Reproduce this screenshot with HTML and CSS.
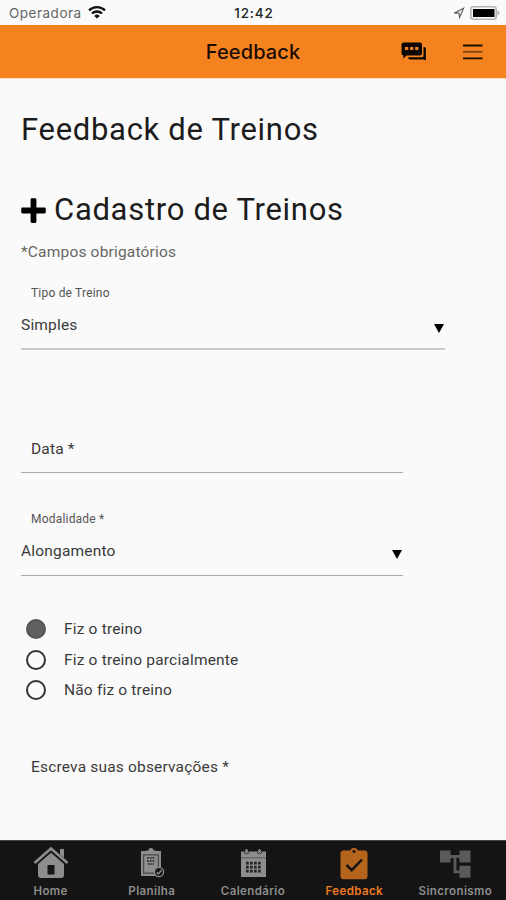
FILE: index.html
```
<!DOCTYPE html>
<html lang="pt-BR">
<head>
    <meta charset="UTF-8">
    <meta name="viewport" content="width=device-width, initial-scale=1.0">
    <title>Feedback</title>
    <link rel="stylesheet" href="styles.css">
</head>
<body>
    <div class="status-bar">
        <div class="carrier">
            <span class="carrier-name">Operadora</span>
            <svg class="wifi" width="20" height="14" viewBox="0 0 20 14">
                <path d="M2 5.4a11.4 11.4 0 0 1 16 0M5 8.5a7.2 7.2 0 0 1 10 0" fill="none" stroke="#111" stroke-width="2.3"/>
                <path d="M10 13.6L7.2 10.9a4 4 0 0 1 5.6 0z" fill="#111"/>
            </svg>
        </div>
        <span class="time">12:42</span>
        <div class="indicators">
            <svg width="12" height="12" viewBox="0 0 12 12">
                <path d="M1.2 6.1L10.5 1.3 6.6 10.4 6 6z" fill="none" stroke="#666" stroke-width="1.2"/>
            </svg>
            <svg width="30" height="14" viewBox="0 0 30 14">
                <rect x="0.8" y="0.8" width="25.4" height="12.4" rx="2.5" fill="#fafafa" stroke="#b5b5b5" stroke-width="1.6"/>
                <rect x="3" y="3" width="21.5" height="8" fill="#000"/>
                <path d="M27.3 4.3l2 1.5v2.4l-2 1.5z" fill="#b5b5b5"/>
            </svg>
        </div>
    </div>

    <header class="navbar">
        <h1>Feedback</h1>
        <div class="actions">
            <svg width="26" height="20" viewBox="0 0 26 20">
                <path d="M2.5 0.5H19a2 2 0 0 1 2 2v9a2 2 0 0 1-2 2H5.5L2.3 16.5V13.4Q0.5 13 0.5 11.5v-9a2 2 0 0 1 2-2z" fill="#0c0703"/>
                <path d="M22.5 5h.6a1.8 1.8 0 0 1 1.8 1.8v11.7L22.5 17.6H9a1.8 1.8 0 0 1-1.8-1.8v-.6H21a1.5 1.5 0 0 0 1.5-1.5z" fill="#0c0703"/>
                <path d="M4 5h3.2v3H4zM9.1 5h3.2v3H9.1zM14.2 5h3.2v3h-3.2z" fill="#f3821f"/>
            </svg>
            <svg width="20" height="16" viewBox="0 0 20 16">
                <path d="M0 1.5h19.5M0 14.3h19.5" stroke="#1a0d03" stroke-width="1.8"/>
                <path d="M0 7.8h19.5" stroke="#8b4a12" stroke-width="2"/>
            </svg>
        </div>
    </header>

    <main>
        <h2>Feedback de Treinos</h2>
        <h2 class="register">
            <svg width="25" height="25" viewBox="0 0 25 25">
                <path d="M9.6 1.6a1.4 1.4 0 0 1 1.4-1.4h3a1.4 1.4 0 0 1 1.4 1.4V9.5h8a1.4 1.4 0 0 1 1.4 1.4v3.2a1.4 1.4 0 0 1-1.4 1.4h-8v8a1.4 1.4 0 0 1-1.4 1.4h-3a1.4 1.4 0 0 1-1.4-1.4v-8H1.6a1.4 1.4 0 0 1-1.4-1.4v-3.2a1.4 1.4 0 0 1 1.4-1.4h8z"/>
            </svg>
            <span>Cadastro de Treinos</span>
        </h2>
        <p class="required">*Campos obrigatórios</p>

        <div class="field field-wide">
            <label>Tipo de Treino</label>
            <div class="select">
                <span>Simples</span>
                <i class="arrow"></i>
            </div>
        </div>

        <div class="field field-date">
            <span class="placeholder">Data *</span>
        </div>

        <div class="field">
            <label>Modalidade *</label>
            <div class="select">
                <span>Alongamento</span>
                <i class="arrow"></i>
            </div>
        </div>

        <div class="radios">
            <div class="radio checked"><i></i><span>Fiz o treino</span></div>
            <div class="radio"><i></i><span>Fiz o treino parcialmente</span></div>
            <div class="radio"><i></i><span>Não fiz o treino</span></div>
        </div>

        <p class="notes">Escreva suas observações *</p>
    </main>

    <nav class="tabbar">
        <div class="tab">
            <svg width="36" height="34" viewBox="0 0 36 34">
                <path d="M1.5 17L18 2.5 34.5 17" fill="none" stroke="#8d8d8d" stroke-width="2.6"/>
                <path d="M27 3h4v9l-4-3.6z" fill="#8d8d8d"/>
                <path d="M18 6.8L31 18v11a3 3 0 0 1-3 3H8a3 3 0 0 1-3-3V18z" fill="#8d8d8d"/>
                <path d="M14.5 19h7v9.5h-7z" fill="#141414"/>
            </svg>
            <span>Home</span>
        </div>
        <div class="tab">
            <svg width="36" height="34" viewBox="0 0 36 34">
                <path d="M7 5h20v25H7z" fill="#8d8d8d"/>
                <path d="M12 7V4.5h2.5a2.5 2.5 0 0 1 5 0H22V7z" fill="#8d8d8d"/>
                <path d="M9.6 8.8h14.8v18.4H9.6z" fill="none" stroke="#4a4a4a" stroke-width="1.2"/>
                <path d="M13 12h8M13 15h8M14 18h6" stroke="#444" stroke-width="1.8" stroke-dasharray="2 .7"/>
                <circle cx="25" cy="26" r="4.6" fill="#181818" stroke="#8d8d8d" stroke-width="1.3"/>
                <path d="M22.7 26.3l1.7 1.7 3.2-4" fill="none" stroke="#8d8d8d" stroke-width="1.3"/>
            </svg>
            <span>Planilha</span>
        </div>
        <div class="tab">
            <svg width="36" height="34" viewBox="0 0 36 34">
                <path d="M6 5.5h25V31H6z" fill="#8d8d8d"/>
                <path d="M6 11.8h25" stroke="#6a6a6a" stroke-width="1.5"/>
                <path d="M9.2 5.5a2.3 2.3 0 0 0 4.6 0M22.2 5.5a2.3 2.3 0 0 0 4.6 0" fill="none" stroke="#3a3a3a"/>
                <path d="M9.8 5.5a1.7 2.5 0 0 1 3.4 0zM22.8 5.5a1.7 2.5 0 0 1 3.4 0z" fill="#8d8d8d"/>
                <path d="M11 17.2h15M11 21.2h15M11 25.2h15" stroke="#242424" stroke-width="2.8" stroke-dasharray="2.7 1.3"/>
            </svg>
            <span>Calendário</span>
        </div>
        <div class="tab active">
            <svg width="36" height="34" viewBox="0 0 36 34">
                <path d="M7.5 4.5H14a4.3 4.3 0 0 1 8 0h6.5a3 3 0 0 1 3 3v22.7a3 3 0 0 1-3 3h-21a3 3 0 0 1-3-3V7.5a3 3 0 0 1 3-3z" fill="#b5651b"/>
                <circle cx="18" cy="5.6" r="1.5" fill="#141414"/>
                <path d="M10.5 19l5.2 5.2L26 13.5" fill="none" stroke="#141414" stroke-width="2.5"/>
            </svg>
            <span>Feedback</span>
        </div>
        <div class="tab">
            <svg width="36" height="34" viewBox="0 0 36 34">
                <path d="M3 4.5h10.5v12H3zM22.5 4.5h11v12h-11zM22.5 19.8h11v12h-11z" fill="#5a5a5a"/>
                <path d="M13 10.5h10M18 10.5v15.4h5" fill="none" stroke="#5a5a5a" stroke-width="2.8"/>
            </svg>
            <span>Sincronismo</span>
        </div>
    </nav>
</body>
</html>
```
FILE: styles.css
```
* {
    box-sizing: border-box;
}
body {
    margin: 0;
    height: 900px;
    display: flex;
    flex-direction: column;
    overflow: hidden;
    background: #fafafa;
    color: #3a3a3a;
    font-family: Roboto, sans-serif;
}
h1, h2, p {
    margin: 0;
    font-weight: 400;
}
svg {
    display: block;
    flex: none;
}
span, label {
    white-space: nowrap;
}

/* status bar */
.status-bar {
    height: 25px;
    display: grid;
    grid-template-columns: 1fr auto 1fr;
    align-items: center;
    padding: 1px 6px 0 9px;
    font-family: Inter, sans-serif;
    font-size: 13.5px;
}
.carrier, .indicators {
    display: flex;
    align-items: center;
}
.carrier {
    gap: 5px;
}
.carrier-name {
    color: #666;
    letter-spacing: 0.5px;
}
.wifi {
    margin-bottom: 2px;
}
.time {
    margin-right: 1px;
    color: #222;
    font-weight: 500;
    letter-spacing: 0.9px;
}
.indicators {
    justify-content: flex-end;
    gap: 5px;
}

/* orange bar */
.navbar {
    height: 54px;
    display: grid;
    grid-template-columns: 1fr auto 1fr;
    align-items: center;
    background: #f3821f;
    border-bottom: 1px solid #fbd9bd;
    padding: 0 23px;
}
.navbar h1 {
    grid-column: 2;
    color: #1a0d03;
    font-family: Inter, sans-serif;
    font-size: 20px;
    font-weight: 500;
    letter-spacing: 0.1px;
}
.actions {
    display: flex;
    align-items: center;
    justify-content: flex-end;
    gap: 36px;
}

/* form */
main {
    flex: 1;
    padding: 31px 21px 0;
    font-size: 15.5px;
    letter-spacing: 0.18px;
}
h2 {
    height: 40px;
    line-height: 40px;
    font-size: 31px;
    font-weight: 400;
    color: #1c1c1c;
    letter-spacing: 0.7px;
}
.register {
    display: flex;
    align-items: center;
    gap: 8px;
    margin-top: 40px;
}
.required {
    margin-top: 10px;
    line-height: 24px;
    color: #666;
}
.field {
    width: 382px;
    height: 67px;
    border-bottom: 1px solid #aaa;
}
.field label {
    display: block;
    height: 20px;
    padding-left: 10px;
    line-height: 20px;
    font-size: 12px;
    letter-spacing: 0.2px;
    color: #555;
}
.field-wide {
    width: 424px;
    margin-top: 19px;
    border-bottom: 2px solid #ccc;
}
.select {
    display: flex;
    justify-content: space-between;
    padding-top: 10px;
    line-height: 24px;
}
.arrow {
    margin: 11px 1px 0 0;
    width: 10px;
    height: 9px;
    background: #000;
    clip-path: polygon(0 0, 100% 0, 50% 100%);
}
.field-date {
    height: 36px;
    margin: 87px 0 36px;
}
.placeholder {
    padding-left: 10px;
    line-height: 24px;
}
.radios {
    margin-top: 38px;
    padding-left: 5px;
}
.radio {
    display: flex;
    align-items: center;
    gap: 18px;
    height: 30.6px;
}
.radio i {
    width: 20px;
    height: 20px;
    border: 2px solid #333;
    border-radius: 50%;
}
.radio.checked i {
    background: #606060;
    border-color: #555;
}
.notes {
    margin-top: 49px;
    padding-left: 10px;
    line-height: 24px;
}

/* bottom tabs */
.tabbar {
    height: 60px;
    display: grid;
    grid-template-columns: repeat(5, 1fr);
    background: #141414;
    border-top: 1px solid #444;
}
.tab {
    display: flex;
    flex-direction: column;
    align-items: center;
    gap: 1px;
    padding-top: 5px;
    color: #8d8d8d;
    font-family: Inter, sans-serif;
    font-size: 11.5px;
    font-weight: 600;
    line-height: 20px;
    letter-spacing: 0.4px;
}
.tab.active {
    color: #ee7c1e;
}
```
